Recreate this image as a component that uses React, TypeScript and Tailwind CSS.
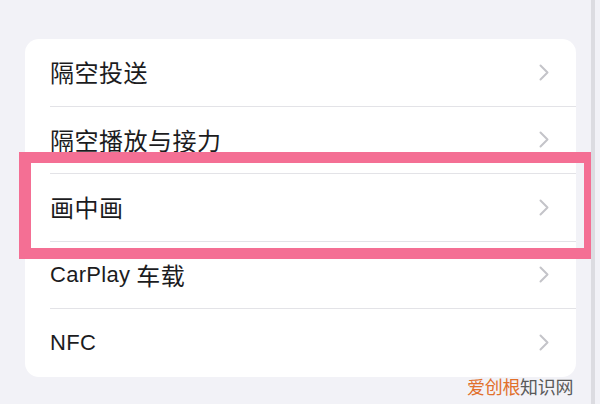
import React from "react";

type Seg = { t: string; latin?: boolean };
const items: Seg[][] = [
  [{ t: "隔空投送" }],
  [{ t: "隔空播放与接力" }],
  [{ t: "画中画" }],
  [{ t: "CarPlay", latin: true }, { t: " 车载" }],
  [{ t: "NFC", latin: true }],
];

function Chevron() {
  return (
    <svg width="12" height="17" viewBox="0 0 12 17" className="shrink-0">
      <path d="M2.5 1.5 L9.5 8.5 L2.5 15.5" fill="none" stroke="#c4c4c9" strokeWidth="2" strokeLinecap="round" strokeLinejoin="round" />
    </svg>
  );
}

export default function App() {
  return (
    <div
      className="relative w-[600px] h-[404px] overflow-hidden bg-[#f2f2f7] pt-[39px] pl-[25px]"
      style={{ fontFamily: '"Noto Sans CJK SC", sans-serif' }}
    >
      <div className="w-[551px] rounded-[14px] bg-white overflow-hidden">
        {items.map((segs, i) => (
          <div key={i} className="h-[67.5px] pl-[25px] flex">
            <div
              className={
                "flex-1 flex items-center justify-between pr-[26px] " +
                (i < items.length - 1 ? "border-b border-[#e3e3e7]" : "")
              }
            >
              <span className="text-[24px] text-[#1c1c1e] tracking-[0.5px] leading-none flex items-center whitespace-pre">
                {segs.map((s, j) =>
                  s.latin ? (
                    <span
                      key={j}
                      className="text-[22px] tracking-[0.3px]"
                      style={{ fontFamily: '"Liberation Sans", Arial, sans-serif' }}
                    >
                      {s.t}
                    </span>
                  ) : (
                    <span key={j}>{s.t}</span>
                  )
                )}
              </span>
              <Chevron />
            </div>
          </div>
        ))}
      </div>

      <div className="absolute left-[19px] top-[152px] w-[575px] h-[107px] border-[#f46f94] border-y-[11px] border-l-[12px] border-r-[10px]" />

      <div className="absolute left-[591px] top-0 w-[4px] h-[404px] bg-[#dcdce1]" />

      <div className="absolute left-[467px] top-[377px] text-[18px] leading-none tracking-[-0.3px]">
        <span className="text-[#e1702c]">爱创根</span>
        <span className="text-[#5a5a5a]">知识网</span>
      </div>
    </div>
  );
}
